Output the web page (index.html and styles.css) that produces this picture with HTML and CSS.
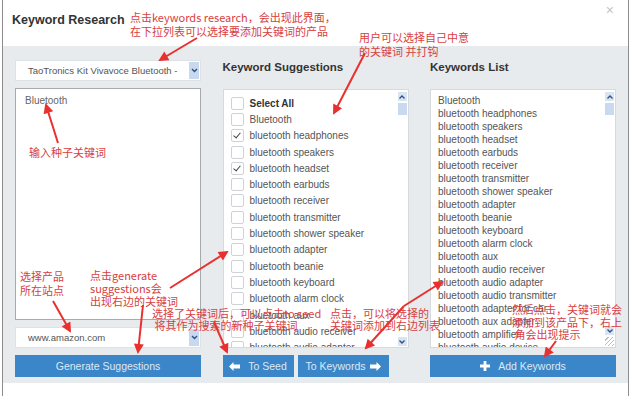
FILE: index.html
```html
<!DOCTYPE html>
<html lang="zh">
<head>
  <meta charset="UTF-8">
  <title>Keyword Research</title>
  <link rel="stylesheet" href="styles.css">
</head>
<body>

  <div class="frame">
    <header class="dlg-head">
      <h1>Keyword Research</h1>
      <span class="close">×</span>
    </header>

    <main class="dlg-body">
      <!-- colonne gauche : produit + mots-clés de départ -->
      <section class="col">
        <div class="select">
          <span>TaoTronics Kit Vivavoce Bluetooth -</span>
          <i class="caret"><svg width="7" height="5" viewBox="0 0 7 5"><path d="M1 1l2.5 2.5L6 1" fill="none" stroke="#2d4f86" stroke-width="1.4"/></svg></i>
        </div>
        <div class="seed">Bluetooth</div>
        <div class="select">
          <span>www.amazon.com</span>
          <i class="caret"><svg width="7" height="5" viewBox="0 0 7 5"><path d="M1 1l2.5 2.5L6 1" fill="none" stroke="#2d4f86" stroke-width="1.4"/></svg></i>
        </div>
        <button class="btn btn-full">Generate Suggestions</button>
      </section>

      <!-- colonne du milieu : suggestions -->
      <section class="col">
        <h2>Keyword Suggestions</h2>
        <div class="box">
          <ul class="checks">
            <li class="all"><span class="cb"></span>Select All</li>
            <li><span class="cb"></span>Bluetooth</li>
            <li><span class="cb on"></span>bluetooth headphones</li>
            <li><span class="cb"></span>bluetooth speakers</li>
            <li><span class="cb on"></span>bluetooth headset</li>
            <li><span class="cb"></span>bluetooth earbuds</li>
            <li><span class="cb"></span>bluetooth receiver</li>
            <li><span class="cb"></span>bluetooth transmitter</li>
            <li><span class="cb"></span>bluetooth shower speaker</li>
            <li><span class="cb"></span>bluetooth adapter</li>
            <li><span class="cb"></span>bluetooth beanie</li>
            <li><span class="cb"></span>bluetooth keyboard</li>
            <li><span class="cb"></span>bluetooth alarm clock</li>
            <li><span class="cb"></span>bluetooth aux</li>
            <li><span class="cb"></span>bluetooth audio receiver</li>
            <li><span class="cb"></span>bluetooth audio adapter</li>
          </ul>
          <div class="sbar">
            <span class="sb-btn"><svg width="6" height="4" viewBox="0 0 6 4"><path d="M0.5 3.5L3 1l2.5 2.5" fill="none" stroke="#2d4f86" stroke-width="1.3"/></svg></span>
            <span class="sb-thumb"></span>
            <span class="sb-fill"></span>
            <span class="sb-btn"><svg width="6" height="4" viewBox="0 0 6 4"><path d="M0.5 0.5L3 3l2.5-2.5" fill="none" stroke="#2d4f86" stroke-width="1.3"/></svg></span>
          </div>
        </div>
        <div class="btn-row">
          <button class="btn btn-seed">
            <svg width="11" height="9" viewBox="0 0 11 9"><path d="M0 4.5L4.5 0v2.6H11v3.8H4.5V9z" fill="#fff"/></svg>
            To Seed
          </button>
          <button class="btn btn-kw">
            To Keywords
            <svg width="11" height="9" viewBox="0 0 11 9"><path d="M11 4.5L6.5 0v2.6H0v3.8h6.5V9z" fill="#fff"/></svg>
          </button>
        </div>
      </section>

      <!-- colonne droite : liste finale -->
      <section class="col">
        <h2>Keywords List</h2>
        <div class="box">
          <ul class="plain">
            <li>Bluetooth</li>
            <li>bluetooth headphones</li>
            <li>bluetooth speakers</li>
            <li>bluetooth headset</li>
            <li>bluetooth earbuds</li>
            <li>bluetooth receiver</li>
            <li>bluetooth transmitter</li>
            <li>bluetooth shower speaker</li>
            <li>bluetooth adapter</li>
            <li>bluetooth beanie</li>
            <li>bluetooth keyboard</li>
            <li>bluetooth alarm clock</li>
            <li>bluetooth aux</li>
            <li>bluetooth audio receiver</li>
            <li>bluetooth audio adapter</li>
            <li>bluetooth audio transmitter</li>
            <li>bluetooth adapter for car</li>
            <li>bluetooth aux adapter</li>
            <li>bluetooth amplifier</li>
            <li>bluetooth audio device</li>
          </ul>
          <div class="sbar">
            <span class="sb-btn"><svg width="6" height="4" viewBox="0 0 6 4"><path d="M0.5 3.5L3 1l2.5 2.5" fill="none" stroke="#2d4f86" stroke-width="1.3"/></svg></span>
            <span class="sb-thumb"></span>
            <span class="sb-fill"></span>
            <span class="sb-btn"><svg width="6" height="4" viewBox="0 0 6 4"><path d="M0.5 0.5L3 3l2.5-2.5" fill="none" stroke="#2d4f86" stroke-width="1.3"/></svg></span>
            <span class="sb-grip"></span>
          </div>
        </div>
        <button class="btn btn-full btn-add">
          <svg width="10" height="10" viewBox="0 0 10 10"><path d="M3.6 0h2.8v3.6H10v2.8H6.4V10H3.6V6.4H0V3.6h3.6z" fill="#fff"/></svg>
          Add Keywords
        </button>
      </section>
    </main>
  </div>

  <!-- annotations en rouge par-dessus la capture -->
  <p class="note n1">点击keywords research，会出现此界面，<br>在下拉列表可以选择要添加关键词的产品</p>
  <p class="note n2">用户可以选择自己中意<br>的关键词 并打钩</p>
  <p class="note n3">输入种子关键词</p>
  <p class="note n4">选择产品<br>所在站点</p>
  <p class="note n5">点击generate<br>suggestions会<br>出现右边的关键词</p>
  <p class="note n6">选择了关键词后，可以点击to seed<br>&nbsp;将其作为搜索的新种子关键词</p>
  <p class="note n7">点击，可以将选择的<br>关键词添加到右边列表</p>
  <p class="note n8">然后点击，关键词就会<br>添加到该产品下，右上<br>&nbsp;角会出现提示</p>

  <svg class="arrows" width="631" height="396" viewBox="0 0 631 396">
    <defs>
      <marker id="ah" viewBox="0 0 10 10" refX="8" refY="5" markerWidth="6" markerHeight="5" orient="auto-start-reverse">
        <path d="M0 0L10 5L0 10z" fill="#e8312f"/>
      </marker>
    </defs>
    <g stroke="#e8312f" stroke-width="2" fill="none" marker-end="url(#ah)">
      <line x1="197" y1="38" x2="160" y2="60"/>
      <line x1="365" y1="53" x2="334" y2="113"/>
      <line x1="58" y1="143" x2="46" y2="105"/>
      <line x1="53" y1="301" x2="70" y2="331"/>
      <line x1="170" y1="288" x2="227" y2="252"/>
      <line x1="143" y1="305" x2="138" y2="352"/>
      <line x1="214" y1="322" x2="227" y2="352"/>
      <line x1="404" y1="306" x2="366" y2="348"/>
      <line x1="404" y1="306" x2="442" y2="282"/>
      <line x1="556" y1="341" x2="545" y2="356"/>
    </g>
  </svg>

</body>
</html>
```

FILE: styles.css
```css
body {
  margin: 0;
  position: relative;
  width: 631px;
  height: 396px;
  overflow: hidden;
  background: #fff;
  font-family: 'Liberation Sans', Arial, sans-serif;
}

.frame {
  margin-left: 2px;
  width: 625px;
  height: 396px;
  border-left: 1px solid #8c8c8c;
  border-right: 1px solid #8c8c8c;
  display: flex;
  flex-direction: column;
}

.dlg-head {
  height: 46px;
  display: flex;
  align-items: center;
  justify-content: space-between;
  padding: 0 14px 6px 9px;
  box-sizing: border-box;
}

.dlg-head h1 {
  margin: 0;
  font-size: 12.5px;
  font-weight: bold;
  color: #333;
}

.close {
  color: #c4c4c4;
  font-size: 14px;
  margin-top: -20px;
}

.dlg-body {
  height: 337px;
  box-sizing: border-box;
  background: #e8ebee;
  padding: 14px 0 0 12px;
  display: grid;
  grid-template-columns: 186px 186px 186px;
  column-gap: 21.5px;
  align-items: start;
}

.col {
  display: flex;
  flex-direction: column;
}

.col h2 {
  margin: 0 0 8px;
  height: 21px;
  line-height: 15px;
  font-size: 11.5px;
  font-weight: bold;
  color: #333;
}

.select {
  height: 21px;
  box-sizing: border-box;
  background: #fff;
  border: 1px solid #dfe2e5;
  display: flex;
  align-items: center;
  justify-content: space-between;
  padding: 0 1px 0 12px;
  font-size: 9.5px;
  color: #555;
}

.caret {
  width: 10px;
  height: 17px;
  background: #c8d8ee;
  display: flex;
  align-items: center;
  justify-content: center;
}

.seed {
  height: 232px;
  margin: 7px 0;
  box-sizing: border-box;
  background: #fff;
  border: 1px solid #a6a9ad;
  padding: 5px 9px;
  font-size: 10px;
  line-height: 13px;
  color: #666;
}

.col .seed + .select + .btn,
.btn-add {
  margin-top: 7px;
}

.box {
  height: 259px;
  box-sizing: border-box;
  background: #fff;
  border: 1px solid #d6d9dd;
  display: flex;
  overflow: hidden;
}

.box ul {
  flex: 1;
  margin: 0;
  list-style: none;
  overflow: hidden;
  font-size: 10px;
  color: #555;
}

.checks {
  padding: 5px 0 0 7px;
}

.checks li {
  height: 16.3px;
  display: flex;
  align-items: center;
  gap: 6px;
  white-space: nowrap;
}

.checks .all {
  font-weight: bold;
  color: #333;
}

.cb {
  width: 11px;
  height: 11px;
  border: 1px solid #cfd2d6;
  border-radius: 2px;
  flex: none;
  position: relative;
}

.cb.on::after {
  content: "";
  position: absolute;
  left: 3px;
  top: 1px;
  width: 3px;
  height: 6px;
  border: solid #444;
  border-width: 0 1.5px 1.5px 0;
  transform: rotate(40deg);
}

.plain {
  padding: 4px 0 0 7px;
}

.plain li {
  height: 13px;
  line-height: 13px;
  white-space: nowrap;
}

.sbar {
  width: 9px;
  margin: 2px 1px 1px 0;
  display: flex;
  flex-direction: column;
}

.sb-btn {
  height: 9px;
  background: #d9e4f3;
  display: flex;
  align-items: center;
  justify-content: center;
}

.sb-thumb {
  height: 12px;
  margin-top: 2px;
  background: #c9d9ef;
}

.sb-fill {
  flex: 1;
}

.sb-grip {
  height: 9px;
  margin-top: 2px;
  background: repeating-linear-gradient(135deg, #fff 0 2px, #b9bcc0 2px 3px);
}

.btn {
  height: 22px;
  border: none;
  padding: 0;
  background: #3a86c8;
  color: #dce9f5;
  font-family: 'Liberation Sans', Arial, sans-serif;
  font-size: 10.5px;
  display: flex;
  align-items: center;
  justify-content: center;
  gap: 8px;
  cursor: pointer;
}

.btn-full {
  width: 186px;
}

.btn-row {
  margin-top: 7px;
  display: flex;
  gap: 4px;
}

.btn-seed {
  width: 71px;
}

.btn-kw {
  width: 91px;
  gap: 4px;
}

.note {
  position: absolute;
  margin: 0;
  font-family: 'Noto Sans CJK SC', 'Liberation Sans', sans-serif;
  font-size: 11px;
  line-height: 13px;
  color: #d8403f;
  white-space: nowrap;
}

.n1 { left: 130px; top: 10px; line-height: 14px; }
.n2 { left: 359px; top: 30px; line-height: 14px; }
.n3 { left: 29px; top: 146px; }
.n4 { left: 20px; top: 269px; line-height: 14px; }
.n5 { left: 90px; top: 269px; }
.n6 { left: 152px; top: 307px; line-height: 12px; }
.n7 { left: 330px; top: 307px; line-height: 12px; }
.n8 { left: 512px; top: 303px; line-height: 12.5px; }

.arrows {
  position: absolute;
  left: 0;
  top: 0;
  pointer-events: none;
}
```
